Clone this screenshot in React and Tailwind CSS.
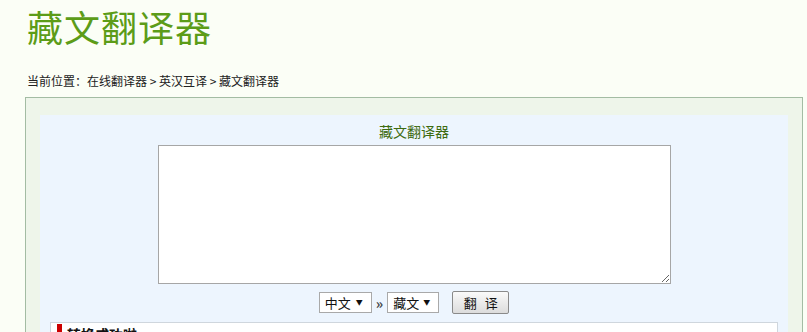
import React, { useState } from 'react';

function FakeSelect({ value, width }) {
    return (
        <div className={`flex items-center justify-between h-[21px] ${width} bg-white border border-[#a9a9a9] pl-[5px] pr-[8px] text-[13px] text-[#111]`}>
            <span className="leading-[19px]">{value}</span>
            <span className="text-[7px] leading-none text-[#111]">▼</span>
        </div>
    );
}

export default function App() {
    const [text, setText] = useState('');

    return (
        <div className="min-h-screen bg-[#fbfef6] font-['Noto_Sans_CJK_SC',sans-serif] pl-[25px] pr-[4px] overflow-hidden">
            {/* Page title */}
            <h1 className="pt-[6px] pl-[2px] text-[36px] leading-[40px] font-normal text-[#5c9c18] tracking-[1px]">
                藏文翻译器
            </h1>

            {/* Breadcrumb */}
            <div className="mt-[27px] pl-[2px] text-[12px] leading-[16px] text-[#222]">
                当前位置：在线翻译器 &gt; 英汉互译 &gt; 藏文翻译器
            </div>

            {/* Main box */}
            <div className="mt-[8px] border border-[#a3bca3] bg-[#eef5ea] pt-[17px] pl-[14px] pr-[14px] h-[260px]">
                <div className="bg-[#edf5fe] pt-[6px] h-full">
                    <div className="text-center text-[14px] leading-[20px] text-[#3d6b10]">藏文翻译器</div>

                    <div className="flex justify-center mt-[4px]">
                        <textarea
                            value={text}
                            onChange={(e) => setText(e.target.value)}
                            className="block w-[513px] h-[139px] bg-white border border-[#a6a6a6] outline-none text-[13px] p-[2px]"
                        />
                    </div>

                    {/* Language selects + button */}
                    <div className="flex justify-center items-center mt-[7px] h-[23px]">
                        <FakeSelect value="中文" width="w-[53px]" />
                        <span className="mx-[4px] text-[14px] leading-none font-bold text-[#444]">»</span>
                        <FakeSelect value="藏文" width="w-[52px]" />
                        <button className="ml-[13px] w-[57px] h-[23px] flex items-center justify-center gap-[8px] border border-[#8a8a8a] rounded-[2px] bg-gradient-to-b from-[#fafafa] to-[#dcdcdc] text-[13px] text-[#111]">
                            <span>翻</span>
                            <span>译</span>
                        </button>
                    </div>

                    {/* Result section */}
                    <div className="mt-[8px] mx-[10px] bg-white border border-[#cfd6dd] pt-[1px] pl-[6px]">
                        <div className="flex items-start">
                            <span className="w-[5px] h-[20px] bg-[#cc0000]"></span>
                            <span className="ml-[5px] text-[14px] leading-[22px] font-bold text-[#111] -mt-[1px]">转换成功啦</span>
                        </div>
                    </div>
                </div>
            </div>
        </div>
    );
}
